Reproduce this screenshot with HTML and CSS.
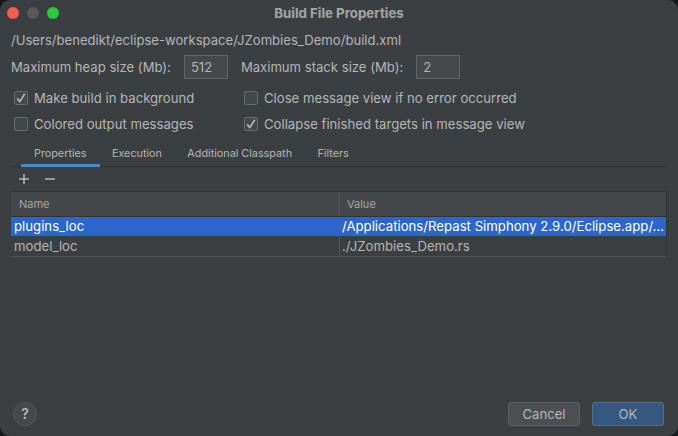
FILE: index.html
```html
<!DOCTYPE html>
<html lang="en">
<head>
  <meta charset="UTF-8">
  <meta name="viewport" content="width=device-width, initial-scale=1.0">
  <title>Build File Properties</title>
  <link rel="stylesheet" href="styles.css">
</head>
<body>
  <div class="window">
    <div class="titlebar">
      <div class="lights">
        <span class="light red"></span>
        <span class="light grey"></span>
        <span class="light green"></span>
      </div>
      <div class="title">Build File Properties</div>
    </div>

    <div class="path">/Users/benedikt/eclipse-workspace/JZombies_Demo/build.xml</div>

    <div class="fields">
      <span class="field-label">Maximum heap size (Mb):</span>
      <span class="input heap">512</span>
      <span class="field-label">Maximum stack size (Mb):</span>
      <span class="input">2</span>
    </div>

    <div class="options">
      <div class="option"><span class="check on"><svg width="12" height="12" viewBox="0 0 12 12"><path d="M2.2 6.4 L4.8 9.6 L9.8 1.8" fill="none" stroke="#b4b6b8" stroke-width="1.7"/></svg></span>Make build in background</div>
      <div class="option"><span class="check"></span>Close message view if no error occurred</div>
      <div class="option"><span class="check"></span>Colored output messages</div>
      <div class="option"><span class="check on"><svg width="12" height="12" viewBox="0 0 12 12"><path d="M2.2 6.4 L4.8 9.6 L9.8 1.8" fill="none" stroke="#b4b6b8" stroke-width="1.7"/></svg></span>Collapse finished targets in message view</div>
    </div>

    <div class="tabs">
      <div class="tab active">Properties</div>
      <div class="tab">Execution</div>
      <div class="tab">Additional Classpath</div>
      <div class="tab">Filters</div>
    </div>

    <div class="toolbar">
      <svg width="12" height="12" viewBox="0 0 12 12"><path d="M6 1 V11 M1 6 H11" stroke="#b4b6b8" stroke-width="1.6"/></svg>
      <svg width="12" height="12" viewBox="0 0 12 12"><path d="M1 6 H11" stroke="#b4b6b8" stroke-width="1.6"/></svg>
    </div>

    <div class="table">
      <div class="row head">
        <div class="cell name">Name</div>
        <div class="cell value">Value</div>
      </div>
      <div class="row selected">
        <div class="cell name">plugins_loc</div>
        <div class="cell value">/Applications/Repast Simphony 2.9.0/Eclipse.app/...</div>
      </div>
      <div class="row">
        <div class="cell name">model_loc</div>
        <div class="cell value">./JZombies_Demo.rs</div>
      </div>
    </div>

    <div class="footer">
      <div class="help">?</div>
      <div class="buttons">
        <div class="btn">Cancel</div>
        <div class="btn primary">OK</div>
      </div>
    </div>
  </div>
</body>
</html>
```

FILE: styles.css
```css
html, body {
  margin: 0;
  padding: 0;
  background-color: #16181a;
}
.window {
  width: 678px;
  height: 436px;
  box-sizing: border-box;
  display: flex;
  flex-direction: column;
  background-color: #3c3f41;
  border-radius: 10px;
  color: #b4b6b8;
  font-family: Inter, "Liberation Sans", sans-serif;
  font-size: 13.1px;
  overflow: hidden;
}
.titlebar {
  height: 26px;
  display: flex;
  align-items: center;
  justify-content: center;
  position: relative;
}
.title {
  font-weight: 700;
  font-size: 13.3px;
  color: #a3a5a7;
}
.lights {
  position: absolute;
  left: 7px;
  top: 7px;
  display: flex;
  gap: 8px;
}
.light {
  width: 12px;
  height: 12px;
  border-radius: 50%;
}
.red { background-color: #fc5a54; }
.grey { background-color: #58595b; }
.green { background-color: #2ac940; }
.path {
  margin: 5px 0 0 11px;
  height: 18px;
  line-height: 18px;
}
.fields {
  margin: 6px 0 0 11px;
  height: 24px;
  display: flex;
  align-items: center;
}
.field-label {
  white-space: nowrap;
}
.input {
  width: 44px;
  height: 24px;
  box-sizing: border-box;
  border: 1px solid #646464;
  background-color: #45494a;
  padding-left: 6px;
  line-height: 22px;
  margin-left: 13px;
}
.heap {
  margin-right: 13px;
}
.options {
  margin: 6px 0 0 14px;
  display: grid;
  grid-template-columns: 230px auto;
  grid-auto-rows: 26px;
  font-size: 13.15px;
}
.option {
  display: flex;
  align-items: center;
  gap: 6px;
  white-space: nowrap;
}
.check {
  width: 14px;
  height: 14px;
  box-sizing: border-box;
  border: 1px solid #6b6b6b;
  border-radius: 2px;
  background-color: #43494a;
  display: flex;
  align-items: center;
  justify-content: center;
}
.tabs {
  margin: 0 11px;
  padding-left: 10px;
  height: 30px;
  display: flex;
  box-sizing: border-box;
  border-bottom: 1px solid #323232;
  font-size: 10.8px;
}
.tab {
  padding: 0 13px;
  margin-right: -0.6px;
  line-height: 33px;
  height: 29px;
  box-sizing: border-box;
}
.tab.active {
  border-bottom: 3px solid #4a88c7;
  height: 30px;
}
.toolbar {
  margin-left: 18px;
  height: 24px;
  display: flex;
  align-items: center;
  gap: 14px;
}
.table {
  margin: 0 11px;
  border-top: 1px solid #323232;
  border-right: 1px solid #323232;
  font-size: 13.2px;
}
.row {
  display: flex;
  height: 21px;
  line-height: 20px;
  border-bottom: 1px solid #505253;
  box-sizing: border-box;
}
.cell {
  padding-left: 3px;
  white-space: nowrap;
  overflow: hidden;
}
.name {
  width: 329px;
  box-sizing: border-box;
  border-right: 1px solid #505253;
}
.value {
  flex: 1;
  padding-left: 2px;
}
.head {
  height: 25px;
  line-height: 24px;
  background-color: #45484a;
  border-bottom: 1px solid #323232;
  font-size: 11px;
  color: #a3a5a7;
}
.head .cell {
  padding-left: 8px;
}
.head .value {
  padding-left: 7px;
}
.selected {
  background-color: #2d65ca;
  color: #ffffff;
  border-bottom: none;
  height: 19px;
  line-height: 19px;
}
.selected .name {
  border-right: none;
}
.footer {
  margin-top: auto;
  padding: 0 14px 10px 13px;
  display: flex;
  align-items: center;
  justify-content: space-between;
}
.help {
  width: 24px;
  height: 24px;
  box-sizing: border-box;
  border: 1px solid #55585a;
  border-radius: 50%;
  background-color: #46494b;
  text-align: center;
  line-height: 22px;
  font-weight: 600;
  font-size: 14px;
}
.buttons {
  display: flex;
  gap: 12px;
}
.btn {
  width: 72px;
  height: 24px;
  box-sizing: border-box;
  border: 1px solid #5e6060;
  border-radius: 3px;
  background-color: #4c5052;
  text-align: center;
  line-height: 22px;
}
.primary {
  background-color: #365880;
  border-color: #4c708c;
}
```
